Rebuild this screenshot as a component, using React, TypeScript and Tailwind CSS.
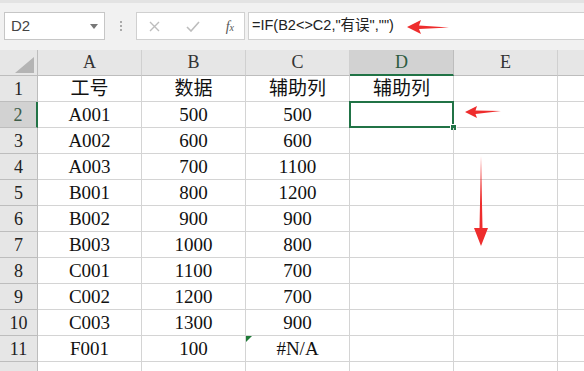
import React from "react";

const cols = ["A", "B", "C", "D", "E"];
const data: [string, string, string, string][] = [
  ["工号", "数据", "辅助列", "辅助列"],
  ["A001", "500", "500", ""],
  ["A002", "600", "600", ""],
  ["A003", "700", "1100", ""],
  ["B001", "800", "1200", ""],
  ["B002", "900", "900", ""],
  ["B003", "1000", "800", ""],
  ["C001", "1100", "700", ""],
  ["C002", "1200", "700", ""],
  ["C003", "1300", "900", ""],
  ["F001", "100", "#N/A", ""],
  ["", "", "", ""],
];

const serif = { fontFamily: '"Liberation Serif", "Noto Sans CJK SC", serif' };
const sans = { fontFamily: '"Liberation Sans", "Noto Sans CJK SC", sans-serif' };

export default function App() {
  return (
    <div className="relative w-[584px] h-[371px] overflow-hidden bg-white" style={sans}>
      {/* Formula bar area */}
      <div className="h-[50px] bg-[#f1f1f1] border-t-[3px] border-[#e3e3e3] flex items-start pt-[9px] pl-[4px]">
        <div className="w-[101px] h-[28px] bg-white border border-[#c6c6c6] flex items-center justify-between pl-[6px] pr-[6px]">
          <span className="text-[15px] text-[#444]">D2</span>
          <svg width="8" height="5" viewBox="0 0 8 5"><path d="M0 0h8L4 5z" fill="#777" /></svg>
        </div>
        <div className="w-[31px] h-[28px] flex items-center justify-center">
          <div className="flex flex-col gap-[2px]">
            <div className="w-[2px] h-[2px] bg-[#aaa]" />
            <div className="w-[2px] h-[2px] bg-[#aaa]" />
            <div className="w-[2px] h-[2px] bg-[#aaa]" />
          </div>
        </div>
        <div className="w-[109px] h-[28px] bg-white border border-[#d0d0d0] flex items-center justify-between pl-[12px] pr-[10px]">
          <svg width="11" height="11" viewBox="0 0 11 11"><path d="M1 1L10 10M10 1L1 10" stroke="#bdbdbd" strokeWidth="1.4" /></svg>
          <svg width="14" height="11" viewBox="0 0 14 11"><path d="M1 6L5 10L13 1" stroke="#bdbdbd" strokeWidth="1.6" fill="none" /></svg>
          <span className="text-[14px] italic text-[#555]" style={serif}>f<span className="text-[10px]">x</span></span>
        </div>
        <div className="ml-[3px] flex-1 h-[28px] bg-white border-y border-l border-[#d0d0d0] flex items-center pl-[3px]">
          <span className="text-[14.5px] text-[#222]">=IF(B2&lt;&gt;C2,"有误","")</span>
        </div>
      </div>

      {/* Grid */}
      <div className="grid grid-cols-[38px_104px_104px_104px_104px_104px_1fr] text-[19px] text-[#111]" style={serif}>
        {/* header row */}
        <div className="relative h-[26px] bg-[#e6e6e6] border-r border-b border-[#bdbdbd]">
          <svg className="absolute right-[3px] bottom-[2px]" width="19" height="16" viewBox="0 0 19 16"><path d="M19 0V16H0z" fill="#b4b4b4" /></svg>
        </div>
        {cols.map((c) => (
          <div
            key={c}
            className={
              c === "D"
                ? "h-[26px] text-[18px] bg-[#d2d2d2] border-r border-[#bdbdbd] border-b-2 border-b-[#217346] flex items-center justify-center text-[#2d5b3f]"
                : "h-[26px] text-[18px] bg-[#e6e6e6] border-r border-b border-[#d0d0d0] border-b-[#bdbdbd] flex items-center justify-center text-[#333]"
            }
          >
            {c}
          </div>
        ))}
        <div className="h-[26px] bg-[#e6e6e6] border-b border-[#bdbdbd]" />

        {data.map((row, ri) => (
          <React.Fragment key={ri}>
            <div
              className={
                ri === 1
                  ? "h-[26px] text-[18px] pt-[2px] bg-[#d2d2d2] border-r-2 border-r-[#217346] border-b border-[#bdbdbd] flex items-center justify-center text-[#3d5c48]"
                  : "h-[26px] text-[18px] pt-[2px] bg-[#e6e6e6] border-r border-b border-[#bdbdbd] flex items-center justify-center text-[#222]"
              }
            >
              {ri < 11 ? ri + 1 : ""}
            </div>
            {row.map((v, ci) => (
              <div key={ci} className="relative h-[26px] pt-[2px] border-r border-b border-[#d4d4d4] flex items-center justify-center">
                {v}
                {ri === 10 && ci === 2 && (
                  <svg className="absolute left-0 top-0" width="6" height="6" viewBox="0 0 6 6"><path d="M0 0H6L0 6z" fill="#1e7a36" /></svg>
                )}
                {ri === 1 && ci === 3 && (
                  <>
                    <div className="absolute -left-[1px] -top-[1px] -right-[1px] -bottom-[1px] border-2 border-[#217346]" />
                    <div className="absolute -right-[4px] -bottom-[4px] w-[7px] h-[7px] bg-[#217346] border border-white" />
                  </>
                )}
              </div>
            ))}
            <div className="h-[26px] border-r border-b border-[#d4d4d4]" />
            <div className="h-[26px] border-b border-[#d4d4d4]" />
          </React.Fragment>
        ))}
      </div>

      {/* Red arrows */}
      <svg className="absolute left-[406px] top-[19px]" width="44" height="16" viewBox="0 0 44 16">
        <path d="M1 8L15 1L13 6.5L43 8.5L13 10L15 15z" fill="#ee2d2d" />
      </svg>
      <svg className="absolute left-[464px] top-[105px]" width="38" height="14" viewBox="0 0 38 14">
        <path d="M1 7L13 1L11.5 5.5L37 6L11.5 9L13 13z" fill="#ee2d2d" />
      </svg>
      <svg className="absolute left-[472px] top-[156px]" width="18" height="91" viewBox="0 0 18 91">
        <path d="M9 0L10.5 72L16 72L9 90L2 72L7.5 72z" fill="#ee2d2d" />
      </svg>
    </div>
  );
}
